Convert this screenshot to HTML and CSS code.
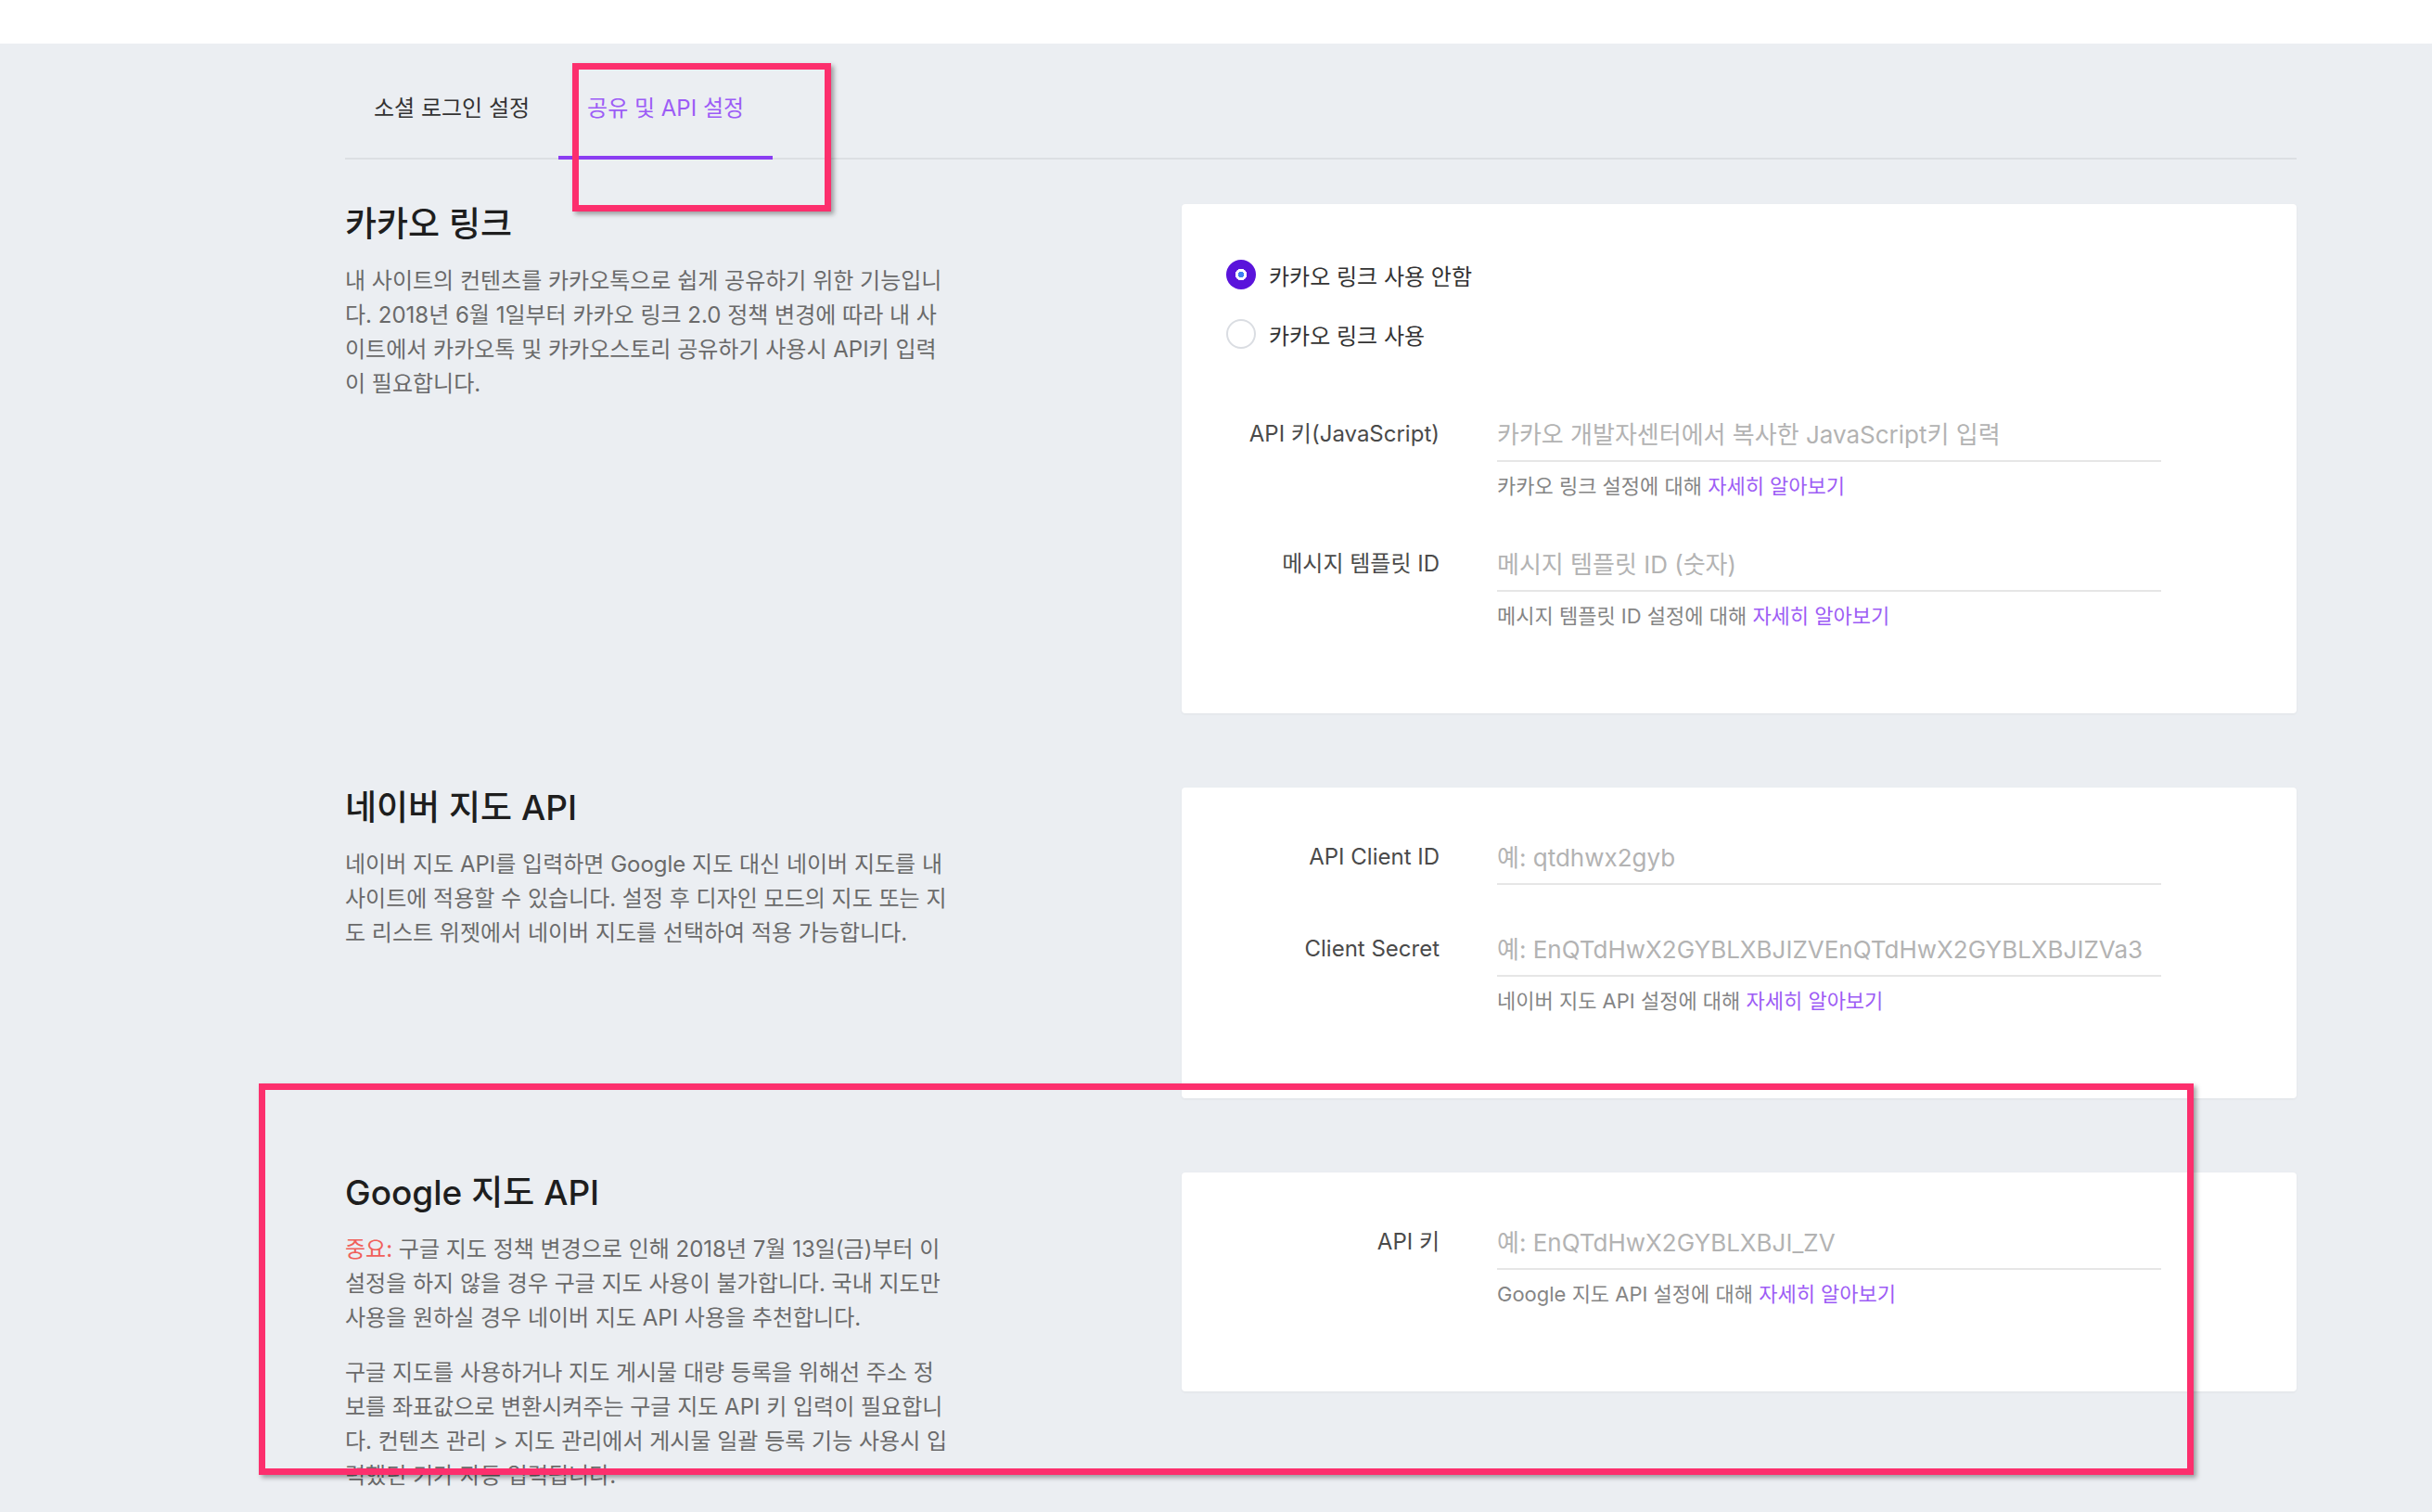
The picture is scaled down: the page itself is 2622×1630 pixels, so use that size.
FILE: index.html
```html
<!DOCTYPE html>
<html lang="ko">
  <head>
    <meta charset="UTF-8" />
    <title>공유 및 API 설정</title>
    <link rel="stylesheet" href="styles.css">
  </head>

  <body>
    <div class="topbar"></div>

    <main class="page">
      <nav class="tabs">
        <a class="tab">소셜 로그인 설정</a>
        <a class="tab active">공유 및 API 설정</a>
      </nav>

      <section class="setting">
        <div class="setting-info">
          <h2>카카오 링크</h2>
          <p>내 사이트의 컨텐츠를 카카오톡으로 쉽게 공유하기 위한 기능입니다. 2018년 6월 1일부터 카카오 링크 2.0 정책 변경에 따라 내 사이트에서 카카오톡 및 카카오스토리 공유하기 사용시 API키 입력이 필요합니다.</p>
        </div>
        <div class="card">
          <div class="radio-list">
            <label class="radio checked"><span class="radio-mark"></span>카카오 링크 사용 안함</label>
            <label class="radio"><span class="radio-mark"></span>카카오 링크 사용</label>
          </div>
          <div class="fields">
            <div class="field">
              <label class="field-label">API 키(JavaScript)</label>
              <input class="field-input" placeholder="카카오 개발자센터에서 복사한 JavaScript키 입력">
              <p class="field-help">카카오 링크 설정에 대해 <a>자세히 알아보기</a></p>
            </div>
            <div class="field">
              <label class="field-label">메시지 템플릿 ID</label>
              <input class="field-input" placeholder="메시지 템플릿 ID (숫자)">
              <p class="field-help">메시지 템플릿 ID 설정에 대해 <a>자세히 알아보기</a></p>
            </div>
          </div>
        </div>
      </section>

      <section class="setting">
        <div class="setting-info">
          <h2>네이버 지도 API</h2>
          <p>네이버 지도 API를 입력하면 Google 지도 대신 네이버 지도를 내 사이트에 적용할 수 있습니다. 설정 후 디자인 모드의 지도 또는 지도 리스트 위젯에서 네이버 지도를 선택하여 적용 가능합니다.</p>
        </div>
        <div class="card">
          <div class="fields">
            <div class="field">
              <label class="field-label">API Client ID</label>
              <input class="field-input" placeholder="예: qtdhwx2gyb">
            </div>
            <div class="field">
              <label class="field-label">Client Secret</label>
              <input class="field-input" placeholder="예: EnQTdHwX2GYBLXBJIZVEnQTdHwX2GYBLXBJIZVa3">
              <p class="field-help">네이버 지도 API 설정에 대해 <a>자세히 알아보기</a></p>
            </div>
          </div>
        </div>
      </section>

      <section class="setting">
        <div class="setting-info">
          <h2>Google 지도 API</h2>
          <p><span class="warn">중요:</span> 구글 지도 정책 변경으로 인해 2018년 7월 13일(금)부터 이 설정을 하지 않을 경우 구글 지도 사용이 불가합니다. 국내 지도만 사용을 원하실 경우 네이버 지도 API 사용을 추천합니다.</p>
          <p>구글 지도를 사용하거나 지도 게시물 대량 등록을 위해선 주소 정보를 좌표값으로 변환시켜주는 구글 지도 API 키 입력이 필요합니다. 컨텐츠 관리 &gt; 지도 관리에서 게시물 일괄 등록 기능 사용시 입력했던 키가 자동 입력됩니다.</p>
        </div>
        <div class="card">
          <div class="fields">
            <div class="field">
              <label class="field-label">API 키</label>
              <input class="field-input" placeholder="예: EnQTdHwX2GYBLXBJI_ZV">
              <p class="field-help">Google 지도 API 설정에 대해 <a>자세히 알아보기</a></p>
            </div>
          </div>
        </div>
      </section>
    </main>

    <!-- highlight boxes -->
    <div class="mark mark-tab"></div>
    <div class="mark mark-google"></div>
  </body>
</html>
```

FILE: styles.css
```css
* {
  box-sizing: border-box;
}

body {
  margin: 0;
  position: relative;
  overflow: hidden;
  background: #ebeef2;
  font-family: Inter, "Noto Sans CJK KR", sans-serif;
  color: #333333;
}

.topbar {
  height: 47px;
  background: #ffffff;
}

.page {
  width: 2104px;
  margin-left: 372px;
}

/* tabs */

.tabs {
  display: flex;
  border-bottom: 2px solid #dcdfe3;
}

.tab {
  padding: 55px 31px 36px;
  line-height: 30px;
  font-size: 24px;
  color: #333333;
  border-bottom: 4px solid transparent;
  margin-bottom: -2px;
  cursor: pointer;
}

.tab.active {
  color: #9c5cf6;
  border-bottom-color: #8a3df2;
}

/* sections */

.setting {
  display: flex;
  justify-content: space-between;
  align-items: flex-start;
  margin-top: 48px;
}

.setting + .setting {
  margin-top: 80px;
}

.setting-info {
  width: 655px;
}

.setting-info h2 {
  margin: 0;
  font-size: 37px;
  line-height: 44px;
  font-weight: 500;
  color: #1e1e1e;
}

.setting-info p {
  margin: 20px 0 0;
  font-size: 24px;
  line-height: 37px;
  color: #6a6a6a;
}

.setting-info p + p {
  margin-top: 22px;
}

.warn {
  color: #f0605a;
}

.card {
  width: 1202px;
  background: #ffffff;
  border-radius: 4px;
  box-shadow: 0 1px 3px rgba(0, 0, 0, 0.05);
  padding: 47px 146px 90px 48px;
}

/* radios */

.radio-list {
  display: flex;
  flex-direction: column;
  gap: 32px;
  margin: 13px 0 64px;
}

.radio {
  display: flex;
  align-items: center;
  height: 32px;
  font-size: 24px;
  color: #333333;
  cursor: pointer;
}

.radio-mark {
  width: 32px;
  height: 32px;
  border-radius: 50%;
  border: 2px solid #dadde2;
  margin-right: 14px;
}

.radio.checked .radio-mark {
  border: 0;
  background: radial-gradient(circle, #3f80f4 0 3px, #ffffff 3.5px 6px, #5a14db 6.5px);
}

/* fields */

.fields {
  display: flex;
  flex-direction: column;
  gap: 41px;
}

.field {
  display: grid;
  grid-template-columns: 230px 716px;
  column-gap: 62px;
}

.field-label {
  text-align: right;
  font-size: 24px;
  line-height: 56px;
  color: #4a4a4a;
  white-space: nowrap;
}

.field-input {
  height: 58px;
  padding: 0;
  border: 0;
  border-bottom: 2px solid #e6e6e6;
  outline: none;
  font-family: inherit;
  font-size: 26px;
  color: #333333;
  background: transparent;
}

.field-input::placeholder {
  color: #b3b3b3;
}

.field-help {
  grid-column: 2;
  margin: 11px 0 0;
  font-size: 22px;
  line-height: 30px;
  color: #858585;
}

.field-help a {
  color: #9d5cf5;
  cursor: pointer;
}

/* highlight boxes */

.mark {
  position: absolute;
  border: 7px solid #fc2f6d;
  box-shadow: 3px 3px 5px rgba(0, 0, 0, 0.35);
}

.mark-tab {
  left: 617px;
  top: 68px;
  width: 279px;
  height: 160px;
}

.mark-google {
  left: 279px;
  top: 1168px;
  width: 2086px;
  height: 422px;
}
```
